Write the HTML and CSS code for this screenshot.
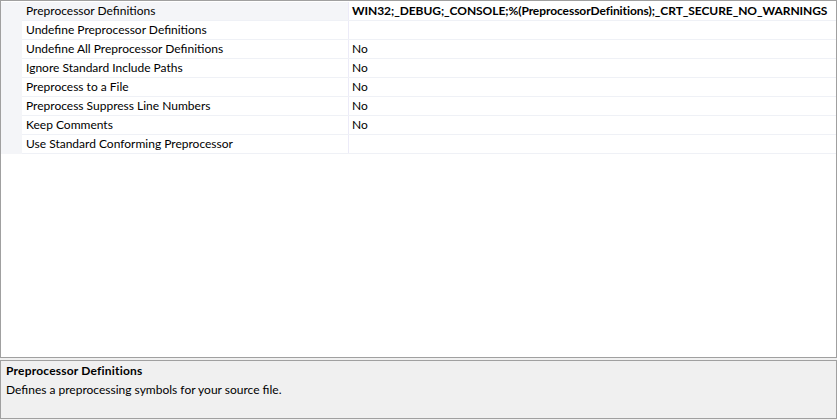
FILE: index.html
```html
<!DOCTYPE html>
<html>
<head>
<meta charset="utf-8">
<link rel="stylesheet" href="styles.css">
</head>
<body>
<div class="page">
  <div class="grid">
    <div class="row selected">
      <div class="gutter"></div>
      <div class="name">Preprocessor Definitions</div>
      <div class="value bold">WIN32;_DEBUG;_CONSOLE;%(PreprocessorDefinitions);_CRT_SECURE_NO_WARNINGS</div>
    </div>
    <div class="row">
      <div class="gutter"></div>
      <div class="name">Undefine Preprocessor Definitions</div>
      <div class="value"></div>
    </div>
    <div class="row">
      <div class="gutter"></div>
      <div class="name">Undefine All Preprocessor Definitions</div>
      <div class="value">No</div>
    </div>
    <div class="row">
      <div class="gutter"></div>
      <div class="name">Ignore Standard Include Paths</div>
      <div class="value">No</div>
    </div>
    <div class="row">
      <div class="gutter"></div>
      <div class="name">Preprocess to a File</div>
      <div class="value">No</div>
    </div>
    <div class="row">
      <div class="gutter"></div>
      <div class="name">Preprocess Suppress Line Numbers</div>
      <div class="value">No</div>
    </div>
    <div class="row">
      <div class="gutter"></div>
      <div class="name">Keep Comments</div>
      <div class="value">No</div>
    </div>
    <div class="row">
      <div class="gutter"></div>
      <div class="name">Use Standard Conforming Preprocessor</div>
      <div class="value"></div>
    </div>
  </div>
  <div class="desc">
    <div class="desc-title">Preprocessor Definitions</div>
    <div class="desc-text">Defines a preprocessing symbols for your source file.</div>
  </div>
</div>
</body>
</html>
```

FILE: styles.css
```css
html, body {
  margin: 0;
  padding: 0;
  background: #ffffff;
}
body {
  font-family: Lato, "Open Sans", sans-serif;
  font-size: 12px;
  color: #000000;
}
.page {
  width: 837px;
  height: 420px;
  display: flex;
  flex-direction: column;
  background: #f0f0f0;
}
.grid {
  box-sizing: border-box;
  width: 837px;
  height: 358px;
  border: 1px solid #a0a0a0;
  background: #ffffff;
  padding-top: 1px;
}
.row {
  display: flex;
  height: 19px;
  box-sizing: border-box;
  border-bottom: 1px solid #eff1f6;
}
.gutter {
  width: 21px;
  flex: none;
  background: #f4f5f8;
  margin-bottom: -1px;
}
.name {
  width: 327px;
  flex: none;
  box-sizing: border-box;
  padding-left: 4px;
  line-height: 18px;
  border-right: 1px solid #ecebf8;
  white-space: nowrap;
}
.selected .name {
  background: #f4f5f8;
}
.value {
  flex: 1;
  padding-left: 3px;
  line-height: 18px;
  white-space: nowrap;
}
.bold {
  font-weight: bold;
  letter-spacing: -0.07px;
}
.desc {
  box-sizing: border-box;
  margin-top: 2px;
  width: 837px;
  height: 59px;
  border: 1px solid #a0a0a0;
  background: #f0f0f0;
  padding: 2px 0 0 5px;
}
.desc-title {
  font-weight: bold;
  line-height: 16px;
  letter-spacing: 0.2px;
}
.desc-text {
  line-height: 16px;
  margin-top: 3px;
}
```
